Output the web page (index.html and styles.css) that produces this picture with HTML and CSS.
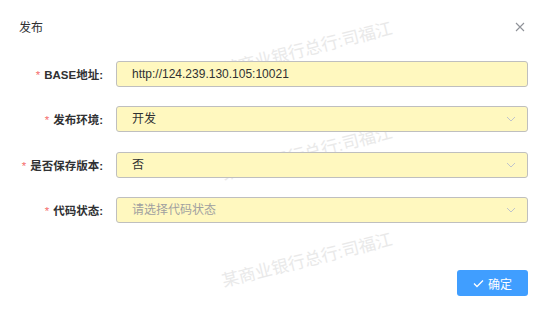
FILE: index.html
```html
<!DOCTYPE html>
<html>
	<head>
		<meta charset="utf-8">
		<title>发布</title>
		<link rel="stylesheet" href="styles.css">
	</head>
	<body>
		<div class="dialog">
			<!-- 水印 -->
			<div class="mark m1">某商业银行总行:司福江</div>
			<div class="mark m2">某商业银行总行:司福江</div>
			<div class="mark m3">某商业银行总行:司福江</div>

			<div class="header">
				<span class="title">发布</span>
				<span class="close">
					<svg width="10" height="10" viewBox="0 0 10 10"><path d="M1 1L9 9M9 1L1 9" stroke="#909399" stroke-width="1.1" fill="none"/></svg>
				</span>
			</div>

			<div class="form">
				<div class="row">
					<label class="label"><i>*</i>BASE地址:</label>
					<div class="input">http://124.239.130.105:10021</div>
				</div>
				<div class="row">
					<label class="label"><i>*</i>发布环境:</label>
					<div class="input select">
						<span>开发</span>
						<svg class="arrow" width="10" height="6" viewBox="0 0 10 6"><path d="M1 1L5 5L9 1" stroke="#c0c4cc" stroke-width="1" fill="none"/></svg>
					</div>
				</div>
				<div class="row">
					<label class="label"><i>*</i>是否保存版本:</label>
					<div class="input select">
						<span>否</span>
						<svg class="arrow" width="10" height="6" viewBox="0 0 10 6"><path d="M1 1L5 5L9 1" stroke="#c0c4cc" stroke-width="1" fill="none"/></svg>
					</div>
				</div>
				<div class="row">
					<label class="label"><i>*</i>代码状态:</label>
					<div class="input select">
						<span class="placeholder">请选择代码状态</span>
						<svg class="arrow" width="10" height="6" viewBox="0 0 10 6"><path d="M1 1L5 5L9 1" stroke="#c0c4cc" stroke-width="1" fill="none"/></svg>
					</div>
				</div>
			</div>

			<div class="footer">
				<button type="button" class="btn">
					<svg width="11" height="9" viewBox="0 0 11 9"><path d="M1 4.5L4 7.5L10 1.5" stroke="#fff" stroke-width="1.3" fill="none"/></svg>
					确定
				</button>
			</div>
		</div>
	</body>
</html>
```

FILE: styles.css
```css
*{
	margin: 0;
	padding: 0;
	box-sizing: border-box;
}
body{
	font-family: "Liberation Sans", "Noto Sans CJK SC", sans-serif;
	font-size: 12px;
	color: #303133;
	background: #fff;
}
.dialog{
	width: 547px;
	height: 317px;
	position: relative;
	background: #fff;
	overflow: hidden;
}
.mark{
	position: absolute;
	left: 220px;
	width: 175px;
	font-size: 17px;
	line-height: 20px;
	color: #e9e9e9;
	white-space: nowrap;
	transform: rotate(-14deg);
	z-index: 0;
	user-select: none;
}
.m1{ top: 40px; }
.m2{ top: 144px; }
.m3{ top: 251px; }

.header{
	height: 56px;
	padding: 0 22px 0 19px;
	display: flex;
	align-items: center;
	justify-content: space-between;
	position: relative;
	z-index: 1;
	padding-bottom: 3px;
}
.title{
	font-size: 12px;
	color: #303133;
}
.close{
	display: flex;
}
.form{
	padding: 5px 19px 0 0;
	position: relative;
	z-index: 1;
}
.row{
	display: flex;
	align-items: center;
	height: 26px;
	margin-bottom: 19.4px;
}
.label{
	width: 116px;
	padding-right: 13px;
	text-align: right;
	font-size: 11.5px;
	font-weight: bold;
	color: #303133;
	white-space: nowrap;
}
.label i{
	font-style: normal;
	font-weight: normal;
	color: #f56c6c;
	margin-right: 4px;
}
.input{
	flex: 1;
	height: 26px;
	line-height: 24px;
	padding: 0 15px;
	background: #fff8bf;
	border: 1px solid #bfbfbf;
	border-radius: 3px;
	color: #303133;
}
.select{
	display: flex;
	align-items: center;
	justify-content: space-between;
	padding-right: 11px;
}
.placeholder{
	color: #a0a0a0;
}
.footer{
	display: flex;
	justify-content: flex-end;
	padding: 0 19px;
	margin-top: 47px;
	position: relative;
	z-index: 1;
}
.btn{
	width: 71px;
	height: 26px;
	border: none;
	border-radius: 3px;
	background: #409eff;
	color: #fff;
	font-family: inherit;
	font-size: 12px;
	display: flex;
	align-items: center;
	justify-content: center;
	gap: 4px;
}
```
